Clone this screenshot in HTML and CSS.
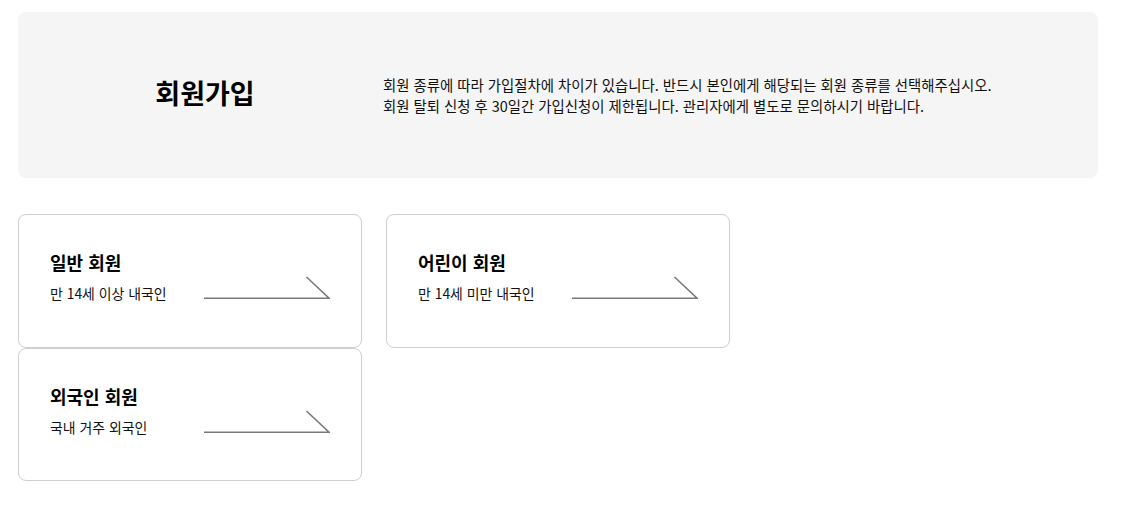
FILE: index.html
```html
<!DOCTYPE html>
<html lang="ko">
<head>
<meta charset="utf-8">
<title>회원가입</title>
<link rel="stylesheet" href="styles.css">
</head>
<body>
<div class="page">
  <section class="intro">
    <h1 class="intro-title">회원가입</h1>
    <div class="intro-desc">
      <p>회원 종류에 따라 가입절차에 차이가 있습니다. 반드시 본인에게 해당되는 회원 종류를 선택해주십시오.</p>
      <p>회원 탈퇴 신청 후 30일간 가입신청이 제한됩니다. 관리자에게 별도로 문의하시기 바랍니다.</p>
    </div>
  </section>
  <div class="cards">
    <a class="card" href="#">
      <div class="card-text">
        <h2 class="card-title">일반 회원</h2>
        <p class="card-sub">만 14세 이상 내국인</p>
      </div>
      <svg class="card-arrow" width="126" height="24" viewBox="0 0 126 24"><polyline points="0,22.2 125,22.2 102.5,1" fill="none" stroke="#7a7a7a" stroke-width="1.6"/></svg>
    </a>
    <a class="card" href="#">
      <div class="card-text">
        <h2 class="card-title">어린이 회원</h2>
        <p class="card-sub">만 14세 미만 내국인</p>
      </div>
      <svg class="card-arrow" width="126" height="24" viewBox="0 0 126 24"><polyline points="0,22.2 125,22.2 102.5,1" fill="none" stroke="#7a7a7a" stroke-width="1.6"/></svg>
    </a>
    <a class="card" href="#">
      <div class="card-text">
        <h2 class="card-title">외국인 회원</h2>
        <p class="card-sub">국내 거주 외국인</p>
      </div>
      <svg class="card-arrow" width="126" height="24" viewBox="0 0 126 24"><polyline points="0,22.2 125,22.2 102.5,1" fill="none" stroke="#7a7a7a" stroke-width="1.6"/></svg>
    </a>
  </div>
</div>
</body>
</html>
```
FILE: styles.css
```css
* { box-sizing: border-box; }
html, body { margin: 0; padding: 0; background: #fff; }
body {
  font-family: "Noto Sans CJK KR", "Noto Sans", sans-serif;
  color: #111;
}
.page {
  padding: 12px 28px 0 18px;
}
.intro {
  display: flex;
  align-items: center;
  height: 166px;
  background: #f5f5f5;
  border-radius: 8px;
  padding-left: 9px;
}
.intro-title {
  width: 356px;
  margin: 0 0 4px;
  text-align: center;
  font-size: 27px;
  font-weight: 700;
  line-height: 36px;
  color: #000;
}
.intro-desc p {
  margin: 0;
  font-size: 14.4px;
  line-height: 21px;
}
.cards {
  display: grid;
  grid-template-columns: 344px 344px;
  column-gap: 24px;
  row-gap: 0;
  margin-top: 36px;
}
.card {
  display: flex;
  justify-content: space-between;
  height: 134px;
  padding: 34px 31px 0 31px;
  border: 1px solid #cfcfcf;
  border-radius: 8px;
  text-decoration: none;
  color: inherit;
  align-self: start;
}
.card:nth-child(3) { height: 133px; }
.card-title {
  margin: 0;
  font-size: 18px;
  font-weight: 700;
  line-height: 26px;
  color: #000;
}
.card-sub {
  margin: 8px 0 0;
  font-size: 13.9px;
  line-height: 21px;
}
.card-arrow {
  display: block;
  margin-top: 27px;
}
```
